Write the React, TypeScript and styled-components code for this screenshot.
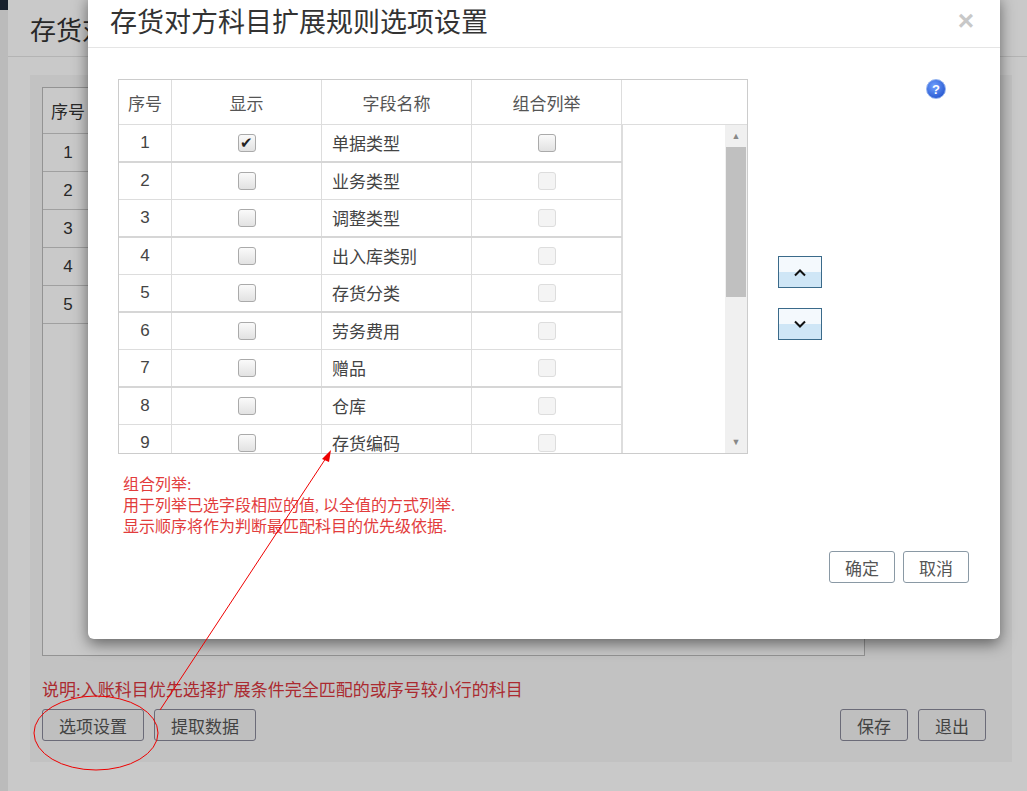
import React from "react";
import styled, { createGlobalStyle } from "styled-components";

const G = createGlobalStyle`
  html,body{margin:0;padding:0;width:1027px;height:791px;overflow:hidden;background:#1f2a3a;}
  body{font-family:"Liberation Sans","Noto Sans CJK SC",sans-serif;}
  #root{width:1027px;height:791px;position:relative;}
`;

const Page = styled.div`
  position:relative;width:1027px;height:791px;display:flex;background:#fff;
`;
const LeftStrip = styled.div`
  width:8px;background:#eee;border-top:10px solid #1f2a3a;
`;
const BackWin = styled.div`
  flex:1;background:#fff;border-radius:6px 0 0 6px;display:flex;flex-direction:column;
`;
const BackTitle = styled.div`
  height:56px;padding-left:22px;display:flex;align-items:center;font-size:26px;color:#333;border-bottom:1px solid #e5e5e5;
`;
const BackBody = styled.div`
  margin:18px 15px 29px 22px;flex:1;background:#f6f6f6;padding:12px;display:flex;flex-direction:column;
`;
const BackTable = styled.div`
  width:821px;height:567px;border:1px solid #bbb;background:#fff;
`;
const BackRow = styled.div<{ h: number }>`
  display:flex;height:${p => p.h}px;border-bottom:1px solid #ccc;
`;
const BackCell = styled.div`
  width:50px;display:flex;align-items:center;justify-content:center;border-right:1px solid #ccc;font-size:17px;color:#333;
`;
const Note = styled.div`
  color:#d9363e;font-size:17px;font-family:"Liberation Serif","Noto Sans CJK SC",serif;margin:20px 0 8px;
`;
const BtnRow = styled.div`display:flex;gap:10px;align-items:center;`;
const Btn = styled.button`
  height:32px;padding:0 16px;font-size:17px;color:#555;background:#f3f3f3;border:1px solid #889;border-radius:3px;
  font-family:"Liberation Serif","Noto Sans CJK SC",serif;
`;
const Spacer = styled.div`flex:1;`;
const EndGap = styled.div`width:4px;`;
const Backdrop = styled.div`
  position:absolute;inset:0;background:rgba(0,0,0,0.21);
`;
const Modal = styled.div`
  position:absolute;left:88px;top:-6px;width:912px;height:645px;background:#fff;border-radius:6px;
  box-shadow:0 5px 15px rgba(0,0,0,0.5);display:flex;flex-direction:column;
`;
const MHead = styled.div`
  height:53px;border-bottom:1px solid #e5e5e5;display:flex;align-items:center;justify-content:space-between;padding:0 26px 0 22px;
  font-size:27px;color:#333;
`;
const Close = styled.span`font-size:28px;color:#c8c8c8;font-weight:bold;`;
const MBody = styled.div`display:flex;padding:31px 0 0 30px;position:relative;`;
const Table = styled.div`width:628px;border:1px solid #ccc;`;
const HRow = styled.div`display:flex;height:44px;border-bottom:1px solid #ddd;`;
const Col = styled.div<{ w: number; left?: boolean }>`
  width:${p => p.w}px;flex:none;display:flex;align-items:center;justify-content:${p => (p.left ? "flex-start" : "center")};
  padding-left:${p => (p.left ? "10px" : "0")};box-sizing:border-box;border-right:1px solid #ddd;font-size:17px;color:#444;
`;
const HCol = styled(Col)`color:#555;`;
const BodyWrap = styled.div`display:flex;height:328px;overflow:hidden;`;
const Rows = styled.div`width:503px;`;
const Row = styled.div<{ thick: boolean }>`
  display:flex;height:37.5px;box-sizing:border-box;border-bottom:${p => (p.thick ? "2px solid #d6d6d6" : "1px solid #ddd")};
`;
const Box = styled.span<{ dis?: boolean }>`
  width:16px;height:16px;border-radius:3px;border:1px solid ${p => (p.dis ? "#ddd" : "#aaa")};
  background:${p => (p.dis ? "#f4f4f4" : "linear-gradient(#fafafa,#e2e2e2)")};display:flex;align-items:center;justify-content:center;
  font-size:15px;color:#222;line-height:1;
`;
const ScrollArea = styled.div`flex:1;display:flex;justify-content:flex-end;border-left:1px solid #ddd;`;
const Track = styled.div`
  width:22px;background:#f0f0f0;display:flex;flex-direction:column;align-items:center;
`;
const Arrow = styled.div`font-size:9px;color:#888;height:22px;display:flex;align-items:center;`;
const Thumb = styled.div`width:20px;height:150px;background:#c0c0c0;`;
const TrackFill = styled.div`flex:1;`;
const Side = styled.div`flex:1;position:relative;`;
const Help = styled.div`
  position:absolute;right:54px;top:0;width:18px;height:18px;border-radius:50%;
  background:radial-gradient(circle at 40% 35%,#6fa0ff,#1646c4);border:1px solid #8fb0ef;color:#fff;font-size:13px;font-weight:bold;
  display:flex;align-items:center;justify-content:center;
`;
const MoveCol = styled.div`
  position:absolute;left:30px;top:177px;display:flex;flex-direction:column;gap:20px;
`;
const MoveBtn = styled.div`
  width:42px;height:30px;border:1px solid #3a6a8a;background:linear-gradient(#f4f9fd 50%,#cfe6f6 50%);
  display:flex;align-items:center;justify-content:center;
`;
const Hint = styled.div`
  color:#e23c3c;font-size:16px;line-height:21px;font-family:"Liberation Serif","Noto Sans CJK SC",serif;padding:20px 0 0 35px;
`;
const Foot = styled.div`display:flex;justify-content:flex-end;gap:8px;padding:0 31px 0 0;margin-top:14px;`;
const FBtn = styled.button`
  height:32px;padding:0 15px;font-size:17px;color:#555;background:#fff;border:1px solid #8a99a5;border-radius:3px;
  font-family:"Liberation Serif","Noto Sans CJK SC",serif;
`;
const Overlay = styled.svg`position:absolute;left:0;top:0;pointer-events:none;`;

const rows = ["单据类型", "业务类型", "调整类型", "出入库类别", "存货分类", "劳务费用", "赠品", "仓库", "存货编码"];

export default function App() {
  return (
    <>
      <G />
      <Page>
        <LeftStrip />
        <BackWin>
          <BackTitle>存货对方科目扩展规则</BackTitle>
          <BackBody>
            <BackTable>
              <BackRow h={45}><BackCell>序号</BackCell></BackRow>
              {[1, 2, 3, 4, 5].map(n => <BackRow h={37} key={n}><BackCell>{n}</BackCell></BackRow>)}
            </BackTable>
            <Note>说明:入账科目优先选择扩展条件完全匹配的或序号较小行的科目</Note>
            <BtnRow>
              <Btn>选项设置</Btn><Btn>提取数据</Btn><Spacer /><Btn>保存</Btn><Btn>退出</Btn><EndGap />
            </BtnRow>
          </BackBody>
        </BackWin>
        <Backdrop />
        <Modal>
          <MHead>存货对方科目扩展规则选项设置<Close>×</Close></MHead>
          <MBody>
            <Table>
              <HRow>
                <HCol w={53}>序号</HCol><HCol w={150}>显示</HCol><HCol w={150}>字段名称</HCol><HCol w={150}>组合列举</HCol>
              </HRow>
              <BodyWrap>
                <Rows>
                  {rows.map((r, i) => (
                    <Row key={r} thick={i % 2 === 0}>
                      <Col w={53}>{i + 1}</Col>
                      <Col w={150}><Box>{i === 0 ? "✔" : ""}</Box></Col>
                      <Col w={150} left>{r}</Col>
                      <Col w={150}><Box dis={i !== 0} /></Col>
                    </Row>
                  ))}
                </Rows>
                <ScrollArea>
                  <Track>
                    <Arrow>▲</Arrow><Thumb /><TrackFill /><Arrow>▼</Arrow>
                  </Track>
                </ScrollArea>
              </BodyWrap>
            </Table>
            <Side>
              <Help>?</Help>
              <MoveCol>
                <MoveBtn><svg width="14" height="9" viewBox="0 0 14 9"><path d="M2 7.5 7 2.5 12 7.5" fill="none" stroke="#111" strokeWidth="2" /></svg></MoveBtn>
                <MoveBtn><svg width="14" height="9" viewBox="0 0 14 9"><path d="M2 1.5 7 6.5 12 1.5" fill="none" stroke="#111" strokeWidth="2" /></svg></MoveBtn>
              </MoveCol>
            </Side>
          </MBody>
          <Hint>
            组合列举:<br />用于列举已选字段相应的值, 以全值的方式列举.<br />显示顺序将作为判断最匹配科目的优先级依据.
          </Hint>
          <Foot><FBtn>确定</FBtn><FBtn>取消</FBtn></Foot>
        </Modal>
        <Overlay width="1027" height="791" viewBox="0 0 1027 791">
          <ellipse cx="96" cy="733" rx="62" ry="37" fill="none" stroke="#e00" strokeWidth="1" />
          <line x1="160" y1="710" x2="328" y2="455" stroke="#e00" strokeWidth="1" />
          <path d="M331 450 L322 459 L329 462 Z" fill="#e00" />
        </Overlay>
      </Page>
    </>
  );
}
